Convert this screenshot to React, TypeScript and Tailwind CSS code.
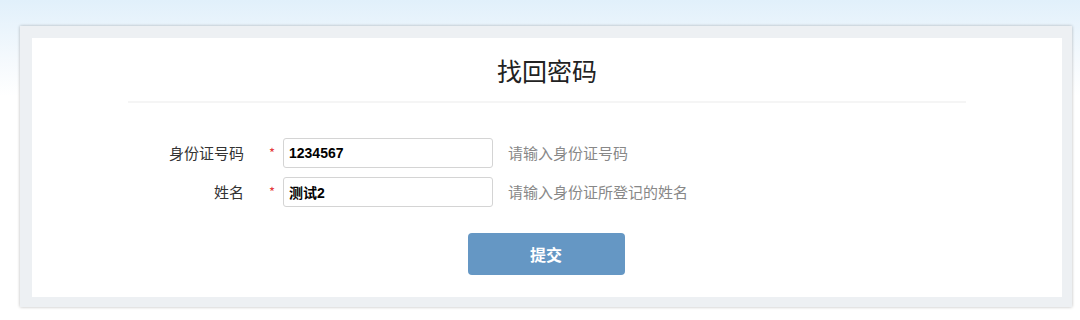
import React, { useState } from "react";

const fields = [
  { key: "idno", label: "身份证号码", value: "1234567", hint: "请输入身份证号码" },
  { key: "name", label: "姓名", value: "测试2", hint: "请输入身份证所登记的姓名" },
];

export default function App() {
  const [values, setValues] = useState<Record<string, string>>({
    idno: fields[0].value,
    name: fields[1].value,
  });

  return (
    <div
      className="w-[1080px] h-[320px] overflow-hidden bg-gradient-to-b from-[#e1f0fb] via-[#f4f9fd] via-[18%] to-white to-[30%] pt-[26px] pl-[20px]"
      style={{ fontFamily: '"Noto Sans CJK SC", "Liberation Sans", sans-serif' }}
    >
      <div className="w-[1052px] h-[281px] bg-[#edf0f3] p-[12px] pr-[10px] pb-[10px] shadow-[0_0_3px_rgba(0,0,0,0.28)]">
        <div className="h-full bg-white flex flex-col items-center">
          <div className="w-[838px] h-[65px] border-b-2 border-[#f5f5f5] flex justify-center items-end pb-[15px]">
            <h1 className="text-[25px] leading-[32px] text-[#222]">找回密码</h1>
          </div>

          <form className="w-full flex flex-col gap-[9px] mt-[35px]" onSubmit={(e) => e.preventDefault()}>
            {fields.map((f) => (
              <div key={f.key} className="flex items-center h-[30px]">
                <label className="w-[212px] text-right text-[15px] text-[#333]">{f.label}</label>
                <span className="w-[39px] pl-[25px] text-[13px] leading-none text-[#e4393c] self-start pt-[8px]">*</span>
                <input
                  value={values[f.key]}
                  onChange={(e) => setValues({ ...values, [f.key]: e.target.value })}
                  className="w-[210px] h-[30px] border border-[#d4d4d4] rounded-[3px] px-[5px] text-[14px] font-bold text-black outline-none"
                  style={{ fontFamily: '"Liberation Sans", "Noto Sans CJK SC", sans-serif' }}
                />
                <span className="ml-[15px] text-[15px] text-[#888]">{f.hint}</span>
              </div>
            ))}

            <div className="flex justify-center mt-[17px]">
              <button
                type="submit"
                className="w-[157px] h-[42px] rounded-[4px] bg-[#6597c4] text-white text-[16px] font-bold -translate-x-px"
              >
                提交
              </button>
            </div>
          </form>
        </div>
      </div>
    </div>
  );
}
